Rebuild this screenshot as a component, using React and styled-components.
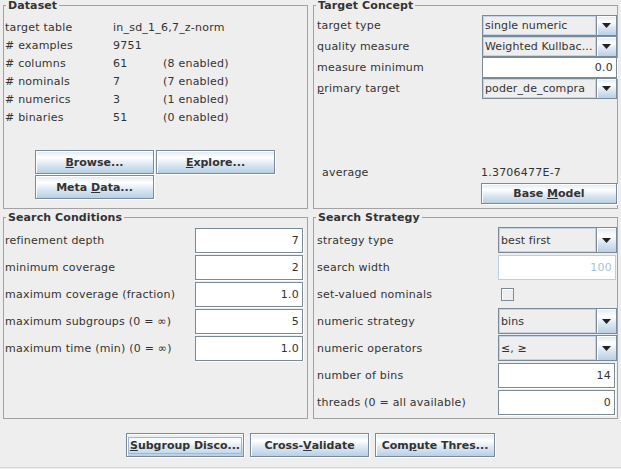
import React from "react";
import styled, { createGlobalStyle, css } from "styled-components";

const GlobalStyle = createGlobalStyle`
  html, body {
    margin: 0;
    padding: 0;
    background: #eeeeee;
  }
  body {
    font-family: "DejaVu Sans", Verdana, sans-serif;
    font-size: 11px;
    letter-spacing: 0.22px;
    color: #333333;
  }
`;

const Window = styled.div`
  width: 621px;
  height: 469px;
  box-sizing: border-box;
  padding: 0 3px 0 3px;
  display: grid;
  grid-template-columns: 305px 305px;
  grid-template-rows: 209px 207px 47px;
  column-gap: 5px;
  row-gap: 3px;
  background: #eeeeee;
`;

const Panel = styled.fieldset`
  margin: 0;
  padding: 0;
  min-width: 0;
  border: 1px solid #a2a2a2;
  display: flex;
  flex-direction: column;
`;

const Title = styled.legend`
  margin-left: 2px;
  padding: 0 2px;
  font-weight: bold;
  letter-spacing: 0.1px;
  line-height: 11px;
`;

const InfoGrid = styled.div`
  display: grid;
  grid-template-columns: 108px 50px auto;
  grid-auto-rows: 18px;
  align-items: center;
  margin-top: 7px;
  padding-left: 1px;
  white-space: nowrap;
`;

const ButtonGrid = styled.div`
  display: grid;
  grid-template-columns: 119px 119px;
  grid-auto-rows: 24px;
  gap: 1px 2px;
  margin: auto 0 9px 31px;
`;

const FormGrid = styled.div`
  display: grid;
  grid-template-columns: 1fr ${(p) => p.$col}px;
  grid-auto-rows: ${(p) => p.$row}px;
  row-gap: ${(p) => p.$gap || 0}px;
  align-items: center;
  margin-top: 4px;
  padding-right: ${(p) => p.$right || 0}px;
  white-space: nowrap;
`;

const Label = styled.div`
  padding-left: ${(p) => p.$indent}px;
`;

const Button = styled.button`
  font-family: "DejaVu Sans", Verdana, sans-serif;
  font-size: 11px;
  font-weight: bold;
  letter-spacing: 0;
  color: #333333;
  width: ${(p) => (p.$w ? `${p.$w}px` : "auto")};
  height: ${(p) => p.$h || 24}px;
  padding: 0;
  margin: 0;
  box-sizing: border-box;
  border: 1px solid #7a8a99;
  border-radius: 0;
  box-shadow: inset 1px 1px 0 #ffffff, 1px 1px 0 #ffffff;
  background: linear-gradient(
    to bottom,
    #dde8f3 0%,
    #ffffff 30%,
    #dde8f3 60%,
    #b8cfe5 100%
  );
  white-space: nowrap;
  display: flex;
  align-items: center;
  justify-content: center;
`;

const Focus = styled.span`
  border: 1px solid #a3b8cc;
  padding: 0 1px;
  line-height: 15px;
`;

const Combo = styled.div`
  height: ${(p) => p.$h}px;
  box-sizing: border-box;
  border: 1px solid #7a8a99;
  display: flex;
  background: #eeeeee;
`;

const ComboValue = styled.div`
  flex: 1;
  min-width: 0;
  border: 1px solid #c4d4e4;
  padding-left: 1px;
  letter-spacing: 0.1px;
  display: flex;
  align-items: center;
  overflow: hidden;
`;

const ComboArrow = styled.div`
  width: 19px;
  flex: none;
  border-left: 1px solid #7a8a99;
  box-shadow: inset 1px 1px 0 #ffffff;
  background: linear-gradient(
    to bottom,
    #dde8f3 0%,
    #ffffff 30%,
    #dde8f3 60%,
    #b8cfe5 100%
  );
  display: flex;
  align-items: center;
  justify-content: center;
`;

const Field = styled.div`
  height: 25px;
  box-sizing: border-box;
  margin-right: ${(p) => p.$mr || 0}px;
  border: 1px solid #7a8a99;
  box-shadow: 1px 1px 0 #ffffff;
  background: #ffffff;
  text-align: right;
  padding-right: 3px;
  line-height: 23px;
  ${(p) =>
    p.$h &&
    css`
      height: ${p.$h}px;
      line-height: ${p.$h - 2}px;
    `}
  ${(p) =>
    p.$disabled &&
    css`
      border-color: #b8cfe5;
      box-shadow: none;
      color: #a9bfd6;
    `}
`;

const Check = styled.div`
  width: 13px;
  height: 13px;
  box-sizing: border-box;
  margin-left: 3px;
  border: 1px solid #7a8a99;
  box-shadow: inset 1px 1px 0 #ffffff;
`;

const BottomGrid = styled.div`
  display: grid;
  grid-template-columns: 1fr 136px;
  grid-template-rows: 18px 21px;
  row-gap: 2px;
  align-items: center;
  margin: auto 0 4px 0;
`;

const Bar = styled.div`
  grid-column: 1 / -1;
  margin: 0 -3px;
  height: 46px;
  box-sizing: border-box;
  border-bottom: 1px solid #d6d6d6;
  padding-top: 11px;
  display: flex;
  justify-content: center;
  align-items: flex-start;
  gap: 6px;
`;

const Arrow = () => (
  <svg width="9" height="5" viewBox="0 0 9 5">
    <polygon points="0,0 9,0 4.5,5" fill="#222" />
  </svg>
);

const Select = ({ value, h }) => (
  <Combo $h={h}>
    <ComboValue>{value}</ComboValue>
    <ComboArrow>
      <Arrow />
    </ComboArrow>
  </Combo>
);

const info = [
  ["target table", "in_sd_1_6,7_z-norm", ""],
  ["# examples", "9751", ""],
  ["# columns", "61", "(8 enabled)"],
  ["# nominals", "7", "(7 enabled)"],
  ["# numerics", "3", "(1 enabled)"],
  ["# binaries", "51", "(0 enabled)"],
];

const conditions = [
  ["refinement depth", "7"],
  ["minimum coverage", "2"],
  ["maximum coverage (fraction)", "1.0"],
  ["maximum subgroups (0 = ∞)", "5"],
  ["maximum time (min) (0 = ∞)", "1.0"],
];

export default function App() {
  return (
    <>
      <GlobalStyle />
      <Window>
        <Panel>
          <Title>Dataset</Title>
          <InfoGrid>
            {info.map(([a, b, c]) => (
              <React.Fragment key={a}>
                <div>{a}</div>
                <div style={c ? undefined : { gridColumn: "2 / 4" }}>{b}</div>
                {c && <div>{c}</div>}
              </React.Fragment>
            ))}
          </InfoGrid>
          <ButtonGrid>
            <Button>
              <u>B</u>rowse...
            </Button>
            <Button>
              <u>E</u>xplore...
            </Button>
            <Button>
              Meta&nbsp;<u>D</u>ata...
            </Button>
          </ButtonGrid>
        </Panel>

        <Panel>
          <Title>Target Concept</Title>
          <FormGrid $col={135} $row={21}>
            <Label $indent={3}>target type</Label>
            <Select value="single numeric" h={21} />
            <Label $indent={3}>quality measure</Label>
            <Select value="Weighted Kullbac..." h={21} />
            <Label $indent={3}>measure minimum</Label>
            <Field $h={21}>0.0</Field>
            <Label $indent={3}>
              <u>p</u>rimary target
            </Label>
            <Select value="poder_de_compra" h={21} />
          </FormGrid>
          <BottomGrid>
            <Label $indent={8}>average</Label>
            <div>1.3706477E-7</div>
            <div />
            <Button $h={21}>
              Base&nbsp;<u>M</u>odel
            </Button>
          </BottomGrid>
        </Panel>

        <Panel>
          <Title>Search Conditions</Title>
          <FormGrid $col={108} $row={26} $gap={1} $right={4}>
            {conditions.map(([a, b]) => (
              <React.Fragment key={a}>
                <Label $indent={1}>{a}</Label>
                <Field>{b}</Field>
              </React.Fragment>
            ))}
          </FormGrid>
        </Panel>

        <Panel>
          <Title>Search Strategy</Title>
          <FormGrid $col={119} $row={26} $gap={1}>
            <Label $indent={3}>strategy type</Label>
            <Select value="best first" h={26} />
            <Label $indent={3}>search width</Label>
            <Field $disabled $mr={1}>
              100
            </Field>
            <Label $indent={3}>set-valued nominals</Label>
            <Check />
            <Label $indent={3}>numeric strategy</Label>
            <Select value="bins" h={26} />
            <Label $indent={3}>numeric operators</Label>
            <Select value="≤, ≥" h={26} />
            <Label $indent={3}>number of bins</Label>
            <Field $mr={2}>14</Field>
            <Label $indent={3}>threads (0 = all available)</Label>
            <Field $mr={2}>0</Field>
          </FormGrid>
        </Panel>

        <Bar>
          <Button $w={118}>
            <Focus>
              <u>S</u>ubgroup Disco...
            </Focus>
          </Button>
          <Button $w={119}>
            Cross-<u>V</u>alidate
          </Button>
          <Button $w={120}>
            Com<u>p</u>ute Thres...
          </Button>
        </Bar>
      </Window>
    </>
  );
}
